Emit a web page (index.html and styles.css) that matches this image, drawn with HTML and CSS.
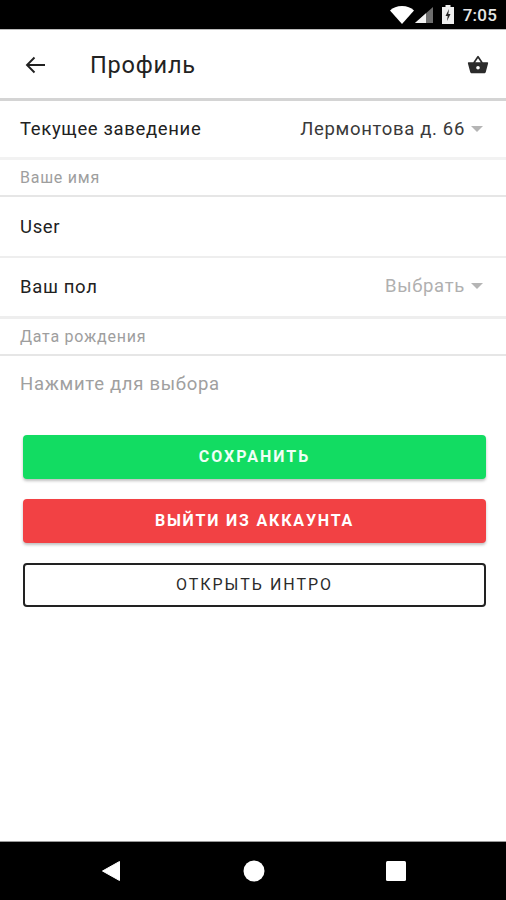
FILE: index.html
```html
<!DOCTYPE html>
<html lang="ru">
<head>
<meta charset="utf-8">
<title>Профиль</title>
<link rel="stylesheet" href="styles.css">
</head>
<body>
<div class="screen">
  <div class="statusbar">
    <svg class="ic-wifi" width="24" height="18" viewBox="0 0 24 18"><path d="M0 4.500C3 1.700 7 0 12 0s9 1.700 12 4.500L12 18z" fill="#fff"/></svg>
    <svg class="ic-signal" width="18" height="16" viewBox="0 0 18 16"><path d="M0 16L18 0v16z" fill="#6e6e6e"/><path d="M0 16L11 6.200V16z" fill="#f2f2f2"/></svg>
    <svg class="ic-batt" width="12" height="19" viewBox="0 0 12 19"><path d="M3.500 0h5v2H12v17H0V2h3.500z" fill="#eee"/><path d="M7 4L3.500 11h2.200L5 16l3.500-7H6.300z" fill="#222"/></svg>
    <span class="clock">7:05</span>
  </div>
  <header class="appbar">
    <svg class="ic-back" width="24" height="24" viewBox="0 0 24 24"><path d="M22 12H4M11.500 4.500L4 12l7.500 7.500" fill="none" stroke="#212121" stroke-width="1.900"/></svg>
    <h1 class="title">Профиль</h1>
    <svg class="ic-basket" width="22" height="22" viewBox="0 0 24 24"><path d="M17.200 9l-4.400-6.600a1 1 0 0 0-1.600 0L6.800 9H2a1 1 0 0 0-1 1.300l2.500 9.200c.2.900 1 1.500 1.900 1.500h13.200c.9 0 1.700-.6 1.900-1.500l2.500-9.200A1 1 0 0 0 22 9zM9 9l3-4.400L15 9zm3 8a2 2 0 1 1 0-4 2 2 0 0 1 0 4z" fill="#2b2b2b"/></svg>
  </header>
  <main class="form">
    <div class="row row-venue">
      <span class="label">Текущее заведение</span>
      <span class="select"><span class="value-dark">Лермонтова д. 66</span><i class="caret"></i></span>
    </div>
    <div class="caption cap-name">Ваше имя</div>
    <div class="row row-user"><span class="label">User</span></div>
    <div class="row row-gender">
      <span class="label">Ваш пол</span>
      <span class="select"><span class="value-light">Выбрать</span><i class="caret"></i></span>
    </div>
    <div class="caption cap-date">Дата рождения</div>
    <div class="row row-date"><span class="placeholder">Нажмите для выбора</span></div>
    <div class="actions">
      <button class="btn btn-green">СОХРАНИТЬ</button>
      <button class="btn btn-red">ВЫЙТИ ИЗ АККАУНТА</button>
      <button class="btn btn-outline">ОТКРЫТЬ ИНТРО</button>
    </div>
  </main>
  <nav class="navbar">
    <svg width="20" height="22" viewBox="0 0 20 22"><path d="M18.500 1.500v19L1.500 11z" fill="#fff" stroke="#fff" stroke-linejoin="round"/></svg>
    <svg width="22" height="22" viewBox="0 0 22 22"><circle cx="11" cy="11" r="10.500" fill="#fff"/></svg>
    <svg width="20" height="20" viewBox="0 0 20 20"><rect x="0" y="0" width="20" height="20" rx="1.500" fill="#fff"/></svg>
  </nav>
</div>
</body>
</html>
```
FILE: styles.css
```css
* { box-sizing: border-box; }
html, body { margin: 0; padding: 0; }
body { background: #fff; font-family: Roboto, "Noto Sans", sans-serif; }
.screen { width: 506px; height: 900px; display: flex; flex-direction: column; background: #fff; overflow: hidden; }

.statusbar { height: 29px; flex: none; background: #000; display: flex; align-items: center; justify-content: flex-end; padding-right: 9px; }
.ic-wifi { margin-right: 1px; }
.ic-signal { margin-right: 9px; margin-top: 1px; }
.ic-batt { margin-right: 9px; }
.clock { color: #e6e6e6; font-size: 17px; font-weight: 500; letter-spacing: 0.2px; }

.appbar { height: 72px; flex: none; display: flex; align-items: center; padding: 1px 17px 0 23px; border-top: 1px solid #bbb; border-bottom: 3px solid #d4d4d4; }
.ic-back { flex: none; }
.title { margin: 1px 0 0 43px; flex: 1; font-size: 23.500px; font-weight: 400; color: #222; letter-spacing: 0.800px; }
.ic-basket { flex: none; }

.form { flex: 1; display: flex; flex-direction: column; }
.row { display: flex; align-items: center; justify-content: space-between; padding: 0 23px 0 20px; flex: none; }
.row-venue { height: 59px; padding-bottom: 1px; border-bottom: 3px solid #f2f2f2; }
.row-user { height: 61px; border-bottom: 2px solid #eeeeee; }
.row-gender { height: 61px; border-bottom: 3px solid #eeeeee; }
.row-gender .select { padding-bottom: 2px; }
.row-date { height: 58px; padding-bottom: 2px; }
.caption { flex: none; height: 37px; padding: 0 20px; display: flex; align-items: center; font-size: 16px; color: #9e9e9e; letter-spacing: 0.75px; border-bottom: 2px solid #e6e6e6; }
.label { font-size: 18.500px; color: #212121; letter-spacing: 0.65px; }
.placeholder { font-size: 18.500px; color: #a0a0a0; letter-spacing: 0.7px; }
.select { display: flex; align-items: center; gap: 6px; font-size: 18.500px; letter-spacing: 0.67px; }
.value-dark { color: #3a3a3a; }
.value-light { color: #b0b0b0; }
.caret { display: block; width: 0; height: 0; border-left: 6.500px solid transparent; border-right: 6.500px solid transparent; border-top: 6.500px solid #b5b5b5; }

.actions { display: flex; flex-direction: column; gap: 20px; padding: 21px 20px 0 23px; }
.btn { height: 44px; border: 0; border-radius: 4px; font-family: inherit; font-size: 16px; font-weight: 700; letter-spacing: 2px; color: #f0fff6; box-shadow: 0 2px 3px rgba(0,0,0,.25); padding: 0 0 1px; }
.btn-green { background: #12dc62; }
.btn-red { background: #f24144; color: #fff; letter-spacing: 1.800px; }
.btn-outline { background: #fff; color: #2b2b2b; font-weight: 400; border: 2px solid #222; box-shadow: none; letter-spacing: 2px; }

.navbar { height: 59px; flex: none; background: #000; border-top: 1px solid #999; display: flex; align-items: center; justify-content: space-between; padding: 0 100px 0 101px; }
```
